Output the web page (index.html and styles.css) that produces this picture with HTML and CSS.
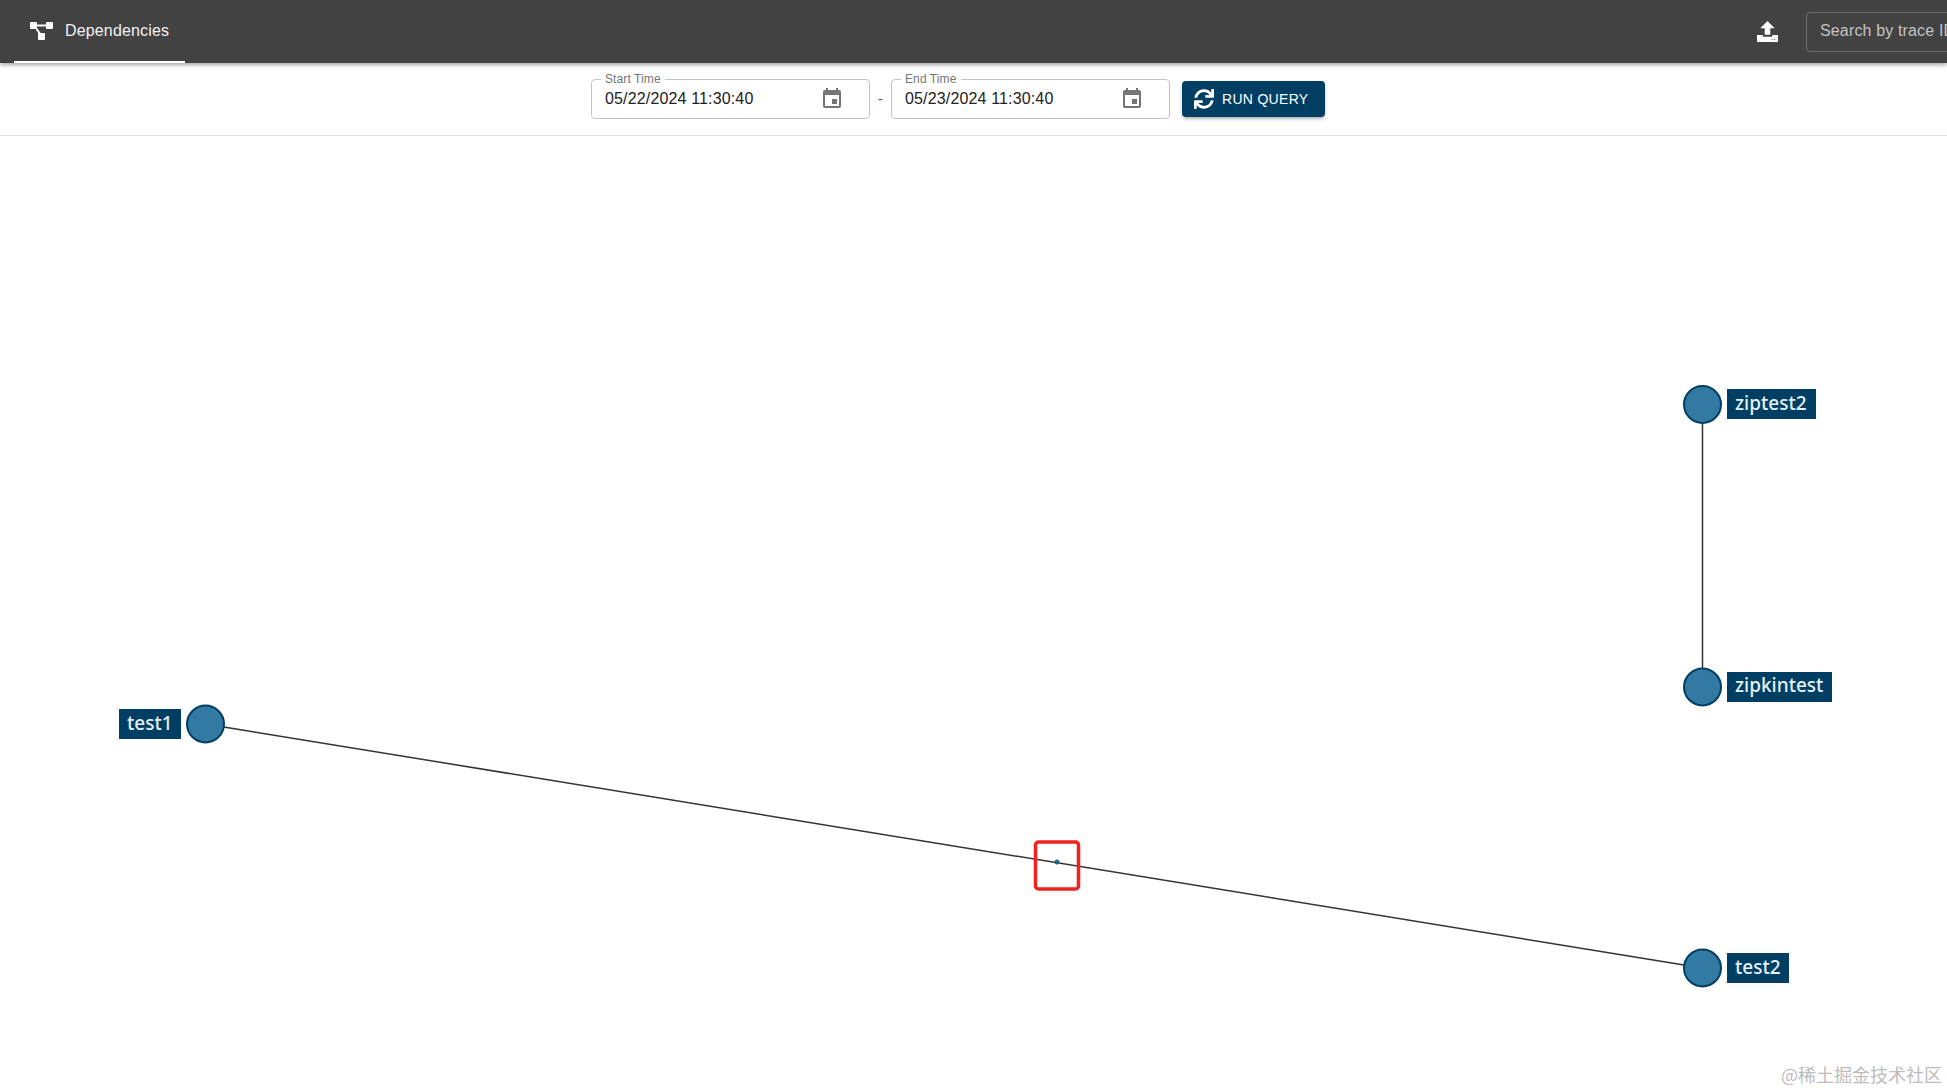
FILE: index.html
```html
<!DOCTYPE html>
<html lang="en">

<head>
    <meta charset="UTF-8">
    <meta name="viewport" content="width=device-width, initial-scale=1.0">
    <title>Dependencies</title>
    <link rel="stylesheet" href="styles.css">
</head>

<body>
    <header class="topbar">
        <a class="tab" href="#">
            <svg class="tab-icon" viewBox="0 0 23 18">
                <rect x="0" y="0" width="7" height="7" rx="1"></rect>
                <rect x="16" y="0" width="7" height="7" rx="1"></rect>
                <rect x="8" y="11" width="7" height="7" rx="1"></rect>
                <path d="M5 2.6h13v2H5zM4.5 5.5l1.7-1 6 9-1.7 1z"></path>
            </svg>
            <span>Dependencies</span>
        </a>
        <div class="topbar-right">
            <svg class="upload-icon" viewBox="0 0 21 21">
                <path d="M10.5 0l7.2 7.2h-4.4v6.6H7.7V7.2H3.300z"></path>
                <path d="M0 14h5.800v1.800h9.400V14H21v7H0z"></path>
                <rect x="14.500" y="18" width="1.200" height="1.200" fill="#777"></rect>
                <rect x="17" y="18" width="1.200" height="1.200" fill="#777"></rect>
            </svg>
            <div class="search-box">Search by trace ID</div>
        </div>
    </header>

    <section class="toolbar">
        <div class="time-field">
            <label>Start Time</label>
            <span class="time-value">05/22/2024 11:30:40</span>
            <svg class="calendar-icon" viewBox="0 0 24 24"><path d="M17 12h-5v5h5v-5zM16 1v2H8V1H6v2H5c-1.110 0-1.990.9-1.990 2L3 19c0 1.100.89 2 2 2h14c1.100 0 2-.9 2-2V5c0-1.100-.9-2-2-2h-1V1h-2zm3 18H5V8h14v11z"></path></svg>
        </div>
        <span class="dash">-</span>
        <div class="time-field">
            <label>End Time</label>
            <span class="time-value">05/23/2024 11:30:40</span>
            <svg class="calendar-icon" viewBox="0 0 24 24"><path d="M17 12h-5v5h5v-5zM16 1v2H8V1H6v2H5c-1.110 0-1.990.9-1.990 2L3 19c0 1.100.89 2 2 2h14c1.100 0 2-.9 2-2V5c0-1.100-.9-2-2-2h-1V1h-2zm3 18H5V8h14v11z"></path></svg>
        </div>
        <button class="run-button">
            <svg viewBox="0 0 512 512"><path d="M440.650 12.570l4 82.770A247.160 247.160 0 0 0 255.830 8C134.730 8 33.910 94.920 12.290 209.820A12 12 0 0 0 24.090 224h49.050a12 12 0 0 0 11.670-9.260 175.910 175.910 0 0 1 317-56.940l-101.460-4.860a12 12 0 0 0-12.570 12v47.410a12 12 0 0 0 12 12H500a12 12 0 0 0 12-12V12a12 12 0 0 0-12-12h-47.370a12 12 0 0 0-11.980 12.570zM255.830 432a175.610 175.610 0 0 1-146-77.800l101.800 4.870a12 12 0 0 0 12.570-12v-47.400a12 12 0 0 0-12-12H12a12 12 0 0 0-12 12V500a12 12 0 0 0 12 12h47.350a12 12 0 0 0 12-12.600l-4.150-82.570A247.170 247.170 0 0 0 255.830 504c121.110 0 221.930-86.920 243.550-201.820a12 12 0 0 0-11.800-14.180h-49.050a12 12 0 0 0-11.670 9.260A175.860 175.860 0 0 1 255.830 432z"></path></svg>
            RUN QUERY
        </button>
    </section>

    <main class="graph">
        <!-- viewBox keeps page coordinates for the diagram -->
        <svg class="graph-canvas" viewBox="0 136 1947 955">
            <line class="edge" x1="205.500" y1="724" x2="1702.500" y2="968"></line>
            <line class="edge" x1="1702.500" y1="404.500" x2="1702.500" y2="687"></line>

            <circle class="node" cx="205.500" cy="724" r="18.500"></circle>
            <rect class="node-label" x="119" y="709" width="62" height="30"></rect>
            <text class="node-text" x="127" y="730">test1</text>

            <circle class="node" cx="1702.500" cy="404.500" r="18.500"></circle>
            <rect class="node-label" x="1727" y="389" width="89" height="30"></rect>
            <text class="node-text" x="1735" y="410">ziptest2</text>

            <circle class="node" cx="1702.500" cy="687" r="18.500"></circle>
            <rect class="node-label" x="1727" y="672" width="105" height="30"></rect>
            <text class="node-text" x="1735" y="692">zipkintest</text>

            <circle class="node" cx="1702.500" cy="968" r="18.500"></circle>
            <rect class="node-label" x="1727" y="953" width="62" height="30"></rect>
            <text class="node-text" x="1735" y="974">test2</text>

            <circle class="dot" cx="1057" cy="862" r="2.500"></circle>
            <rect class="highlight" x="1035.500" y="842" width="43" height="47" rx="3"></rect>
        </svg>
        <div class="watermark">@稀土掘金技术社区</div>
    </main>
</body>

</html>
```

FILE: styles.css
```css
html,
body {
    margin: 0;
    padding: 0;
    height: 100%;
    overflow: hidden;
}

body {
    display: flex;
    flex-direction: column;
    font-family: "Liberation Sans", Arial, sans-serif;
    background-color: #ffffff;
}

.topbar {
    position: relative;
    z-index: 2;
    display: flex;
    justify-content: space-between;
    flex-shrink: 0;
    height: 63px;
    padding-left: 14px;
    background-color: #424242;
    box-shadow: 0 2px 4px rgba(0, 0, 0, 0.35);
}

.tab {
    display: flex;
    align-items: center;
    gap: 12px;
    box-sizing: border-box;
    width: 171px;
    padding: 1px 0 0 16px;
    border-bottom: 2px solid #ffffff;
    color: #f2f2f2;
    font-size: 16px;
    letter-spacing: 0.15px;
    text-decoration: none;
}

.tab-icon {
    width: 23px;
    height: 18px;
    margin-top: -1px;
    fill: #ffffff;
}

.topbar-right {
    display: flex;
    align-items: center;
    gap: 28px;
    width: 190px;
    flex-shrink: 0;
    overflow: hidden;
}

.upload-icon {
    width: 21px;
    height: 21px;
    flex-shrink: 0;
    fill: #ffffff;
}

.search-box {
    flex-shrink: 0;
    box-sizing: border-box;
    width: 220px;
    height: 40px;
    padding: 0 13px;
    border: 1px solid #6e6e6e;
    border-radius: 4px;
    color: #c4c4c4;
    font-size: 16px;
    letter-spacing: 0.15px;
    line-height: 36px;
}

.toolbar {
    display: flex;
    align-items: center;
    flex-shrink: 0;
    box-sizing: border-box;
    height: 73px;
    padding-left: 591px;
    border-bottom: 1px solid #e0e0e0;
}

.time-field {
    position: relative;
    display: flex;
    align-items: center;
    justify-content: space-between;
    box-sizing: border-box;
    width: 279px;
    height: 40px;
    padding: 0 26px 0 13px;
    border: 1px solid #c4c4c4;
    border-radius: 4px;
}

.time-field label {
    position: absolute;
    top: -8px;
    left: 9px;
    padding: 0 4px;
    background-color: #ffffff;
    color: #757575;
    font-size: 12px;
    letter-spacing: 0.1px;
    line-height: 14px;
}

.time-value {
    color: #212121;
    font-size: 16px;
    letter-spacing: 0.15px;
}

.calendar-icon {
    width: 24px;
    height: 24px;
    margin-right: -1px;
    fill: #757575;
}

.dash {
    width: 21px;
    color: #666666;
    font-size: 16px;
    text-align: center;
}

.run-button {
    display: flex;
    align-items: center;
    gap: 8px;
    box-sizing: border-box;
    width: 143px;
    height: 36px;
    margin-left: 12px;
    padding: 0 0 0 12px;
    border: none;
    border-radius: 4px;
    background-color: #003f63;
    box-shadow: 0 3px 3px -2px rgba(0, 0, 0, 0.2), 0 2px 4px rgba(0, 0, 0, 0.2);
    color: #ffffff;
    font-family: inherit;
    font-size: 14px;
    letter-spacing: 0.3px;
}

.run-button svg {
    width: 20px;
    height: 20px;
    fill: #ffffff;
}

.graph {
    position: relative;
    flex: 1;
    min-height: 0;
}

.graph-canvas {
    display: block;
    width: 100%;
    height: 100%;
}

.edge {
    stroke: #333333;
    stroke-width: 1.500;
}

.node {
    fill: #337aa3;
    stroke: #003f63;
    stroke-width: 2;
}

.node-label {
    fill: #003f63;
}

.node-text {
    fill: #e6f0f5;
    font-family: "Noto Sans", sans-serif;
    font-size: 19px;
    font-weight: 500;
}

.dot {
    fill: #1f6689;
}

.highlight {
    fill: none;
    stroke: #f0231e;
    stroke-width: 3.500;
}

.watermark {
    position: absolute;
    right: 5px;
    bottom: 4px;
    color: #bcbcbc;
    font-family: "Noto Sans CJK SC", sans-serif;
    font-size: 18px;
}
```
